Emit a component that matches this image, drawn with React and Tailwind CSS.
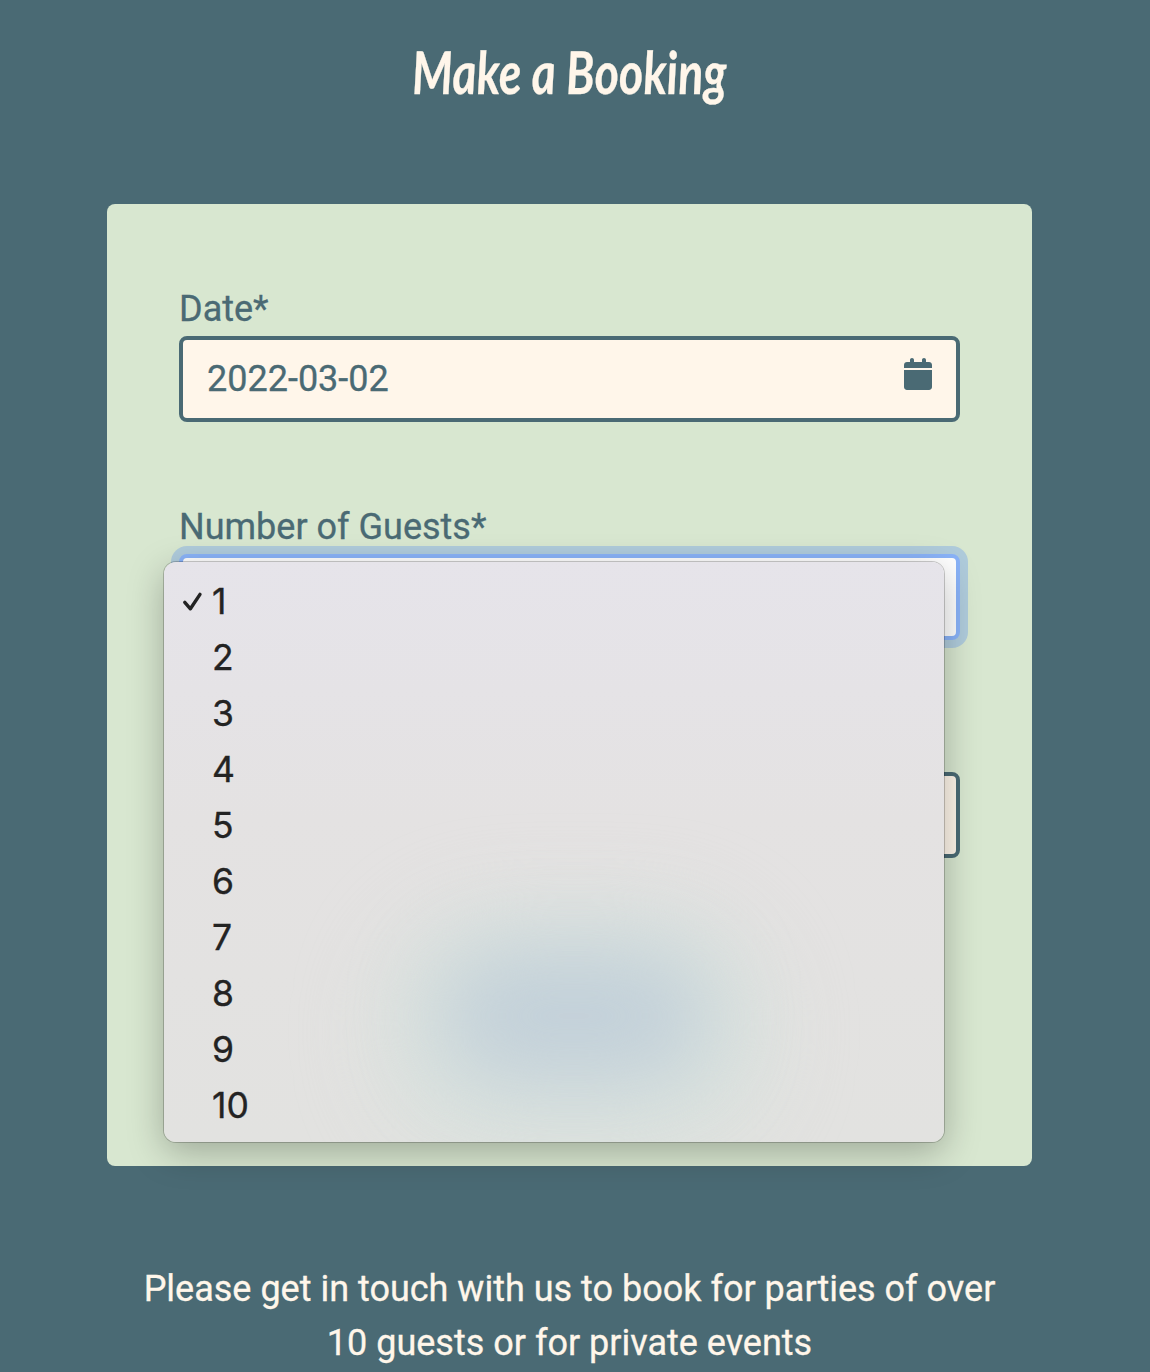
import { useState } from "react";

const GUESTS = [1, 2, 3, 4, 5, 6, 7, 8, 9, 10];

function CalendarIcon() {
  return (
    <svg width="28" height="32" viewBox="0 0 448 512" fill="currentColor" aria-hidden="true">
      <path d="M96 32C96 14 110 0 128 0s32 14 32 32v32h128V32c0-18 14-32 32-32s32 14 32 32v32h48c27 0 48 21 48 48v48H0v-48c0-27 21-48 48-48h48V32zM448 192v272c0 26-21 48-48 48H48c-27 0-48-22-48-48V192h448z" />
    </svg>
  );
}

function Check() {
  return (
    <svg width="22" height="22" viewBox="0 0 22 22" fill="none" stroke="currentColor" strokeWidth="3.4" strokeLinecap="round" strokeLinejoin="round">
      <path d="M3.8 11.4 9.4 17.8 19 3.4" />
    </svg>
  );
}

function GuestMenu({ selected, onSelect }) {
  return (
    <div className="absolute left-[-15px] top-2 h-[580px] w-[780px] rounded-xl shadow-[0_0_0_1px_rgba(0,0,0,0.2),0_10px_36px_rgba(0,0,0,0.27)]">
      <div className="relative h-full overflow-hidden rounded-xl bg-linear-to-b from-[#e6e4ea] via-[#e4e2e2] via-45% to-[#e2e2e0]">
        <div className="absolute left-[215px] top-[345px] h-[250px] w-[390px] rounded-full bg-[#d8e2dd]/80 blur-[40px]" />
        <div className="absolute left-[275px] top-[388px] h-[132px] w-[270px] rounded-[66px] bg-[#c2d0d9] blur-[42px]" />
        <ul role="listbox" className="relative pt-3 font-[Inter,sans-serif] text-[35.5px] text-[#232323] [-webkit-text-stroke:0.35px_#232323]">
          {GUESTS.map((n) => (
            <li
              key={n}
              role="option"
              aria-selected={selected === n}
              onClick={() => onSelect(n)}
              className="flex h-14 items-center pl-[17px] leading-[56px]"
            >
              <span className="w-[31px]">{selected === n && <Check />}</span>
              <span>{n}</span>
            </li>
          ))}
        </ul>
      </div>
    </div>
  );
}

export default function App() {
  const [guests, setGuests] = useState(1);
  return (
    <main className="h-[1372px] overflow-hidden bg-[#4a6a74] font-[Roboto,sans-serif] text-4xl leading-[54px] text-[#fff6ea] [-webkit-text-stroke:0.3px_currentColor]">
      <div className="flex w-[1139px] flex-col items-center">
        <h1 className="flex h-[204px] items-start pt-9 font-[Lato,sans-serif] text-[59px] font-bold italic leading-[72px]">
          <span className="inline-block origin-center skew-x-3 scale-x-[0.79] whitespace-nowrap">Make a Booking</span>
        </h1>
        <form className="relative h-[962px] w-[925px] rounded-lg bg-[#d8e7d0] px-[72px] pt-[78px] text-[#4a6a74]">
          <label className="block">Date*</label>
          <div className="flex h-[86px] w-[781px] items-center justify-between rounded-lg border-4 border-[#4a6a74] bg-[#fff6ea] px-6">
            <span>2022-03-02</span>
            <span className="mb-2.5">
              <CalendarIcon />
            </span>
          </div>
          <label className="mt-[78px] block">Number of Guests*</label>
          <div className="relative z-10 w-[781px]">
            <div className="h-[86px] rounded-lg border-4 border-[#8ab3f8] bg-white shadow-[0_0_0_8px_rgba(134,176,230,0.5)]" />
            <GuestMenu selected={guests} onSelect={setGuests} />
          </div>
          <div className="mt-[132px] h-[86px] w-[781px] rounded-lg border-4 border-[#4a6a74] bg-[#fff6ea]" />
        </form>
        <p className="mt-24 w-[880px] text-center">
          Please get in touch with us to book for parties of over 10 guests or for private events
        </p>
      </div>
    </main>
  );
}
